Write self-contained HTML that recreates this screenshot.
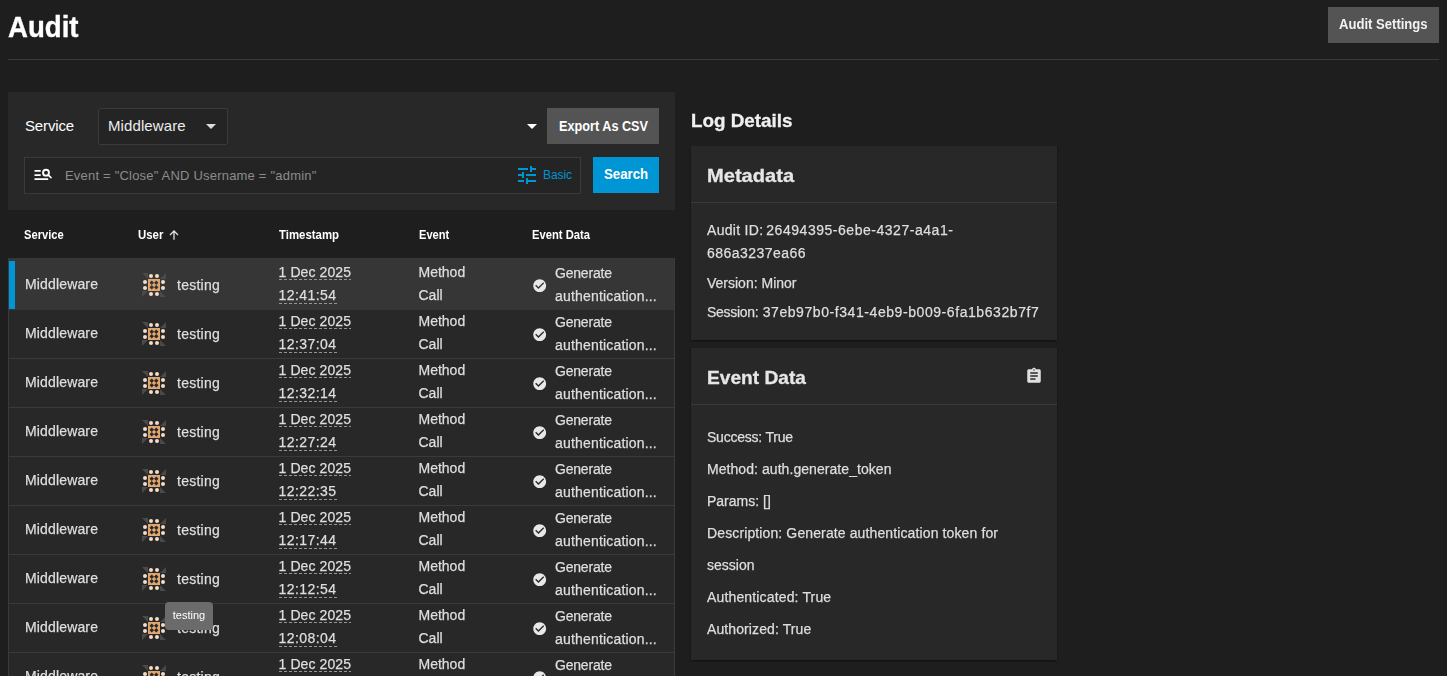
<!DOCTYPE html><html lang="en"><head><meta charset="utf-8"><title>Audit</title><style>
*{box-sizing:border-box;margin:0;padding:0}
html,body{width:1447px;height:676px;overflow:hidden;background:#1e1e1e}
body{position:relative;font-family:"Liberation Sans",sans-serif;color:#dedede;font-size:14px}
.abs{position:absolute}
.g{position:absolute;left:0;top:0;width:1447px;height:676px;will-change:transform}
.t{position:absolute;white-space:nowrap;line-height:1}
.sx{display:inline-block;transform-origin:0 50%;white-space:nowrap}
h1{position:absolute;left:8px;top:12.500px;font-size:29px;font-weight:bold;color:#fff;line-height:1;white-space:nowrap;will-change:transform;-webkit-text-stroke:0.350px #fff}
.btn{position:absolute;background:#545454;color:#fff;font-weight:bold;font-size:14px;white-space:nowrap}
.btn span{position:absolute;top:0}
.hr{position:absolute;left:8px;top:59px;width:1431px;height:1px;background:#3a3a3a}
.card{position:absolute;background:#282828}
.field{position:absolute;background:#242424;border:1px solid #3a3a3a;border-radius:2px}
.tri{position:absolute;width:0;height:0;border-left:5px solid transparent;border-right:5px solid transparent;border-top:5px solid #fff}
.th{position:absolute;top:228px;font-size:12px;font-weight:bold;color:#fff;line-height:14px;white-space:nowrap}
.row{position:absolute;left:8px;width:667px;height:49px;background:#282828;border-left:1px solid #3a3a3a;border-right:1px solid #3a3a3a;border-bottom:1px solid #3a3a3a}
.row .c{position:absolute;white-space:nowrap;line-height:23px;font-size:14px;color:#dedede;-webkit-text-stroke:0.250px #dedede}
.ul{background:repeating-linear-gradient(90deg,#959595 0 3px,transparent 3px 5px) left bottom/100% 1px no-repeat}
.p{position:absolute;left:707px;white-space:nowrap;font-size:14px;line-height:16px;color:#dedede;-webkit-text-stroke:0.250px #dedede}
.p b{font-weight:normal;position:absolute;top:0}
h3{position:absolute;font-size:19px;font-weight:bold;color:#e6e6e6;line-height:1;white-space:nowrap;-webkit-text-stroke:0.300px currentColor}
</style></head><body>
<h1><span class="sx" style="transform:scaleX(0.952)">Audit</span></h1>
<div class="g"><div class="btn" style="left:1328px;top:7px;width:111px;height:36px;line-height:35px;color:#f2f2f2"><span style="left:10.900px"><span class="sx" style="transform:scaleX(0.934)">Audit Settings</span></span></div></div>
<div class="hr"></div>
<div class="card" style="left:8px;top:92px;width:667px;height:118px"></div>
<div class="t" style="left:25px;top:118px;font-size:15px;color:#fff;letter-spacing:-0.15px">Service</div>
<div class="field" style="left:98px;top:108px;width:130px;height:37px"></div>
<div class="t" style="left:108px;top:118px;font-size:15px;color:#ececec;letter-spacing:0.1px">Middleware</div>
<div class="tri" style="left:206px;top:124px;border-top-color:#dcdcdc"></div>
<div class="tri" style="left:527px;top:124px"></div>
<div class="btn" style="left:547px;top:108px;width:112px;height:36px;line-height:37px"><span style="left:11.500px"><span class="sx" style="transform:scaleX(0.906)">Export As CSV</span></span></div>
<div class="field" style="left:24px;top:157px;width:557px;height:37px;border-radius:0"></div>
<svg class="abs" style="left:28px;top:162px" width="30" height="26" viewBox="0 0 30 26"><path fill="#fff" d="M6.500 8.100h6.200v1.600h-6.200zM6.500 12.200h6.200v1.700h-6.200zM6.500 16.300h13.700v1.700H6.500z"/><circle cx="18" cy="10.650" r="2.950" fill="none" stroke="#fff" stroke-width="1.900"/><path d="M20.300 13.100l2.700 2.500" stroke="#fff" stroke-width="1.600" stroke-linecap="round" fill="none"/></svg>
<div class="t" style="left:65px;top:169px;font-size:13px;color:#8c8c8c;letter-spacing:0.2px">Event = "Close" AND Username = "admin"</div>
<svg class="abs" style="left:515px;top:163px" width="24" height="24" viewBox="0 0 24 24"><path fill="#0095d5" d="M3 17v2h6v-2H3zM3 5v2h10V5H3zm10 16v-2h8v-2h-8v-2h-2v6h2zM7 9v2H3v2h4v2h2V9H7zm14 4v-2H11v2h10zm-6-4h2V7h4V5h-4V3h-2v6z"/></svg>
<div class="t" style="left:543px;top:169px;font-size:12px;color:#0095d5;letter-spacing:-0.1px">Basic</div>
<div class="btn" style="left:593px;top:157px;width:66px;height:36px;line-height:35px;background:#0095d5"><span style="left:11px"><span class="sx" style="transform:scaleX(0.945)">Search</span></span></div>
<div class="th" style="left:24px"><span class="sx" style="transform:scaleX(0.93)">Service</span></div>
<div class="th" style="left:138px"><span class="sx" style="transform:scaleX(0.95)">User</span></div>
<div class="th" style="left:278.5px"><span class="sx" style="transform:scaleX(0.95)">Timestamp</span></div>
<div class="th" style="left:418.5px"><span class="sx" style="transform:scaleX(0.925)">Event</span></div>
<div class="th" style="left:532px"><span class="sx" style="transform:scaleX(0.935)">Event Data</span></div>
<svg class="abs" style="left:169px;top:230px" width="10" height="10" viewBox="0 0 10 10"><path fill="none" stroke="#e0e0e0" stroke-width="1.3" d="M5 9.800V1.200M1 5l4-4 4 4"/></svg>
<div class="g">
<div class="abs" style="left:8px;top:258px;width:667px;height:52px;background:#363636;border-left:1px solid #3a3a3a;border-right:1px solid #3a3a3a"></div>
<div class="abs" style="left:9px;top:261px;width:6px;height:48px;background:#0095d5"></div>
<div class="row" style="top:261px;background:transparent;border-bottom-color:transparent">
<div class="c" style="left:16px;top:12px;letter-spacing:0.15px">Middleware</div>
<svg class="abs" style="left:133px;top:12px" width="24" height="24" viewBox="0 0 24 24"><path fill="#4a4a4a" d="M0 0h6v6zM24 0v6h-6zM24 24h-6v-6zM0 24v-6h6z"/><g fill="#f5dcc8"><circle cx="9" cy="3" r="2"/><circle cx="15" cy="3" r="2"/><circle cx="21" cy="9" r="2"/><circle cx="21" cy="15" r="2"/><circle cx="15" cy="21" r="2"/><circle cx="9" cy="21" r="2"/><circle cx="3" cy="15" r="2"/><circle cx="3" cy="9" r="2"/></g><path fill="#e0a66f" fill-rule="evenodd" d="M6 6h12v12H6zM9.75 7.5l2.25 2.25-2.25 2.25-2.25-2.25zM14.25 7.5l2.25 2.25-2.25 2.25-2.25-2.25zM9.75 12.0l2.25 2.25-2.25 2.25-2.25-2.25zM14.25 12.0l2.25 2.25-2.25 2.25-2.25-2.25z"/></svg>
<div class="c" style="left:168px;top:13px;letter-spacing:0.25px">testing</div>
<div class="c ul" style="left:269.500px;top:0px;height:19px;letter-spacing:0.1px">1 Dec 2025</div>
<div class="c ul" style="left:269.500px;top:23px;height:20px;letter-spacing:0.45px;margin-right:-0.450px">12:41:54</div>
<div class="c" style="left:409.500px;top:0px">Method<br>Call</div>
<svg class="abs" style="left:522.7px;top:16.9px" width="15.400" height="15.400" viewBox="0 0 24 24"><path fill="#e8e8e8" d="M12 2C6.48 2 2 6.48 2 12s4.480 10 10 10 10-4.480 10-10S17.520 2 12 2zm-2 15l-5-5 1.410-1.410L10 14.170l7.590-7.590L19 8l-9 9z"/></svg>
<div class="c" style="left:546px;top:1px"><span style="letter-spacing:-0.2px">Generate</span><br><span style="letter-spacing:0.18px">authentication...</span></div>
</div>
<div class="row" style="top:310px">
<div class="c" style="left:16px;top:12px;letter-spacing:0.15px">Middleware</div>
<svg class="abs" style="left:133px;top:12px" width="24" height="24" viewBox="0 0 24 24"><path fill="#4a4a4a" d="M0 0h6v6zM24 0v6h-6zM24 24h-6v-6zM0 24v-6h6z"/><g fill="#f5dcc8"><circle cx="9" cy="3" r="2"/><circle cx="15" cy="3" r="2"/><circle cx="21" cy="9" r="2"/><circle cx="21" cy="15" r="2"/><circle cx="15" cy="21" r="2"/><circle cx="9" cy="21" r="2"/><circle cx="3" cy="15" r="2"/><circle cx="3" cy="9" r="2"/></g><path fill="#e0a66f" fill-rule="evenodd" d="M6 6h12v12H6zM9.75 7.5l2.25 2.25-2.25 2.25-2.25-2.25zM14.25 7.5l2.25 2.25-2.25 2.25-2.25-2.25zM9.75 12.0l2.25 2.25-2.25 2.25-2.25-2.25zM14.25 12.0l2.25 2.25-2.25 2.25-2.25-2.25z"/></svg>
<div class="c" style="left:168px;top:13px;letter-spacing:0.25px">testing</div>
<div class="c ul" style="left:269.500px;top:0px;height:19px;letter-spacing:0.1px">1 Dec 2025</div>
<div class="c ul" style="left:269.500px;top:23px;height:20px;letter-spacing:0.45px;margin-right:-0.450px">12:37:04</div>
<div class="c" style="left:409.500px;top:0px">Method<br>Call</div>
<svg class="abs" style="left:522.7px;top:16.9px" width="15.400" height="15.400" viewBox="0 0 24 24"><path fill="#e8e8e8" d="M12 2C6.48 2 2 6.48 2 12s4.480 10 10 10 10-4.480 10-10S17.520 2 12 2zm-2 15l-5-5 1.410-1.410L10 14.170l7.590-7.590L19 8l-9 9z"/></svg>
<div class="c" style="left:546px;top:1px"><span style="letter-spacing:-0.2px">Generate</span><br><span style="letter-spacing:0.18px">authentication...</span></div>
</div>
<div class="row" style="top:359px">
<div class="c" style="left:16px;top:12px;letter-spacing:0.15px">Middleware</div>
<svg class="abs" style="left:133px;top:12px" width="24" height="24" viewBox="0 0 24 24"><path fill="#4a4a4a" d="M0 0h6v6zM24 0v6h-6zM24 24h-6v-6zM0 24v-6h6z"/><g fill="#f5dcc8"><circle cx="9" cy="3" r="2"/><circle cx="15" cy="3" r="2"/><circle cx="21" cy="9" r="2"/><circle cx="21" cy="15" r="2"/><circle cx="15" cy="21" r="2"/><circle cx="9" cy="21" r="2"/><circle cx="3" cy="15" r="2"/><circle cx="3" cy="9" r="2"/></g><path fill="#e0a66f" fill-rule="evenodd" d="M6 6h12v12H6zM9.75 7.5l2.25 2.25-2.25 2.25-2.25-2.25zM14.25 7.5l2.25 2.25-2.25 2.25-2.25-2.25zM9.75 12.0l2.25 2.25-2.25 2.25-2.25-2.25zM14.25 12.0l2.25 2.25-2.25 2.25-2.25-2.25z"/></svg>
<div class="c" style="left:168px;top:13px;letter-spacing:0.25px">testing</div>
<div class="c ul" style="left:269.500px;top:0px;height:19px;letter-spacing:0.1px">1 Dec 2025</div>
<div class="c ul" style="left:269.500px;top:23px;height:20px;letter-spacing:0.45px;margin-right:-0.450px">12:32:14</div>
<div class="c" style="left:409.500px;top:0px">Method<br>Call</div>
<svg class="abs" style="left:522.7px;top:16.9px" width="15.400" height="15.400" viewBox="0 0 24 24"><path fill="#e8e8e8" d="M12 2C6.48 2 2 6.48 2 12s4.480 10 10 10 10-4.480 10-10S17.520 2 12 2zm-2 15l-5-5 1.410-1.410L10 14.170l7.590-7.590L19 8l-9 9z"/></svg>
<div class="c" style="left:546px;top:1px"><span style="letter-spacing:-0.2px">Generate</span><br><span style="letter-spacing:0.18px">authentication...</span></div>
</div>
<div class="row" style="top:408px">
<div class="c" style="left:16px;top:12px;letter-spacing:0.15px">Middleware</div>
<svg class="abs" style="left:133px;top:12px" width="24" height="24" viewBox="0 0 24 24"><path fill="#4a4a4a" d="M0 0h6v6zM24 0v6h-6zM24 24h-6v-6zM0 24v-6h6z"/><g fill="#f5dcc8"><circle cx="9" cy="3" r="2"/><circle cx="15" cy="3" r="2"/><circle cx="21" cy="9" r="2"/><circle cx="21" cy="15" r="2"/><circle cx="15" cy="21" r="2"/><circle cx="9" cy="21" r="2"/><circle cx="3" cy="15" r="2"/><circle cx="3" cy="9" r="2"/></g><path fill="#e0a66f" fill-rule="evenodd" d="M6 6h12v12H6zM9.75 7.5l2.25 2.25-2.25 2.25-2.25-2.25zM14.25 7.5l2.25 2.25-2.25 2.25-2.25-2.25zM9.75 12.0l2.25 2.25-2.25 2.25-2.25-2.25zM14.25 12.0l2.25 2.25-2.25 2.25-2.25-2.25z"/></svg>
<div class="c" style="left:168px;top:13px;letter-spacing:0.25px">testing</div>
<div class="c ul" style="left:269.500px;top:0px;height:19px;letter-spacing:0.1px">1 Dec 2025</div>
<div class="c ul" style="left:269.500px;top:23px;height:20px;letter-spacing:0.45px;margin-right:-0.450px">12:27:24</div>
<div class="c" style="left:409.500px;top:0px">Method<br>Call</div>
<svg class="abs" style="left:522.7px;top:16.9px" width="15.400" height="15.400" viewBox="0 0 24 24"><path fill="#e8e8e8" d="M12 2C6.48 2 2 6.48 2 12s4.480 10 10 10 10-4.480 10-10S17.520 2 12 2zm-2 15l-5-5 1.410-1.410L10 14.170l7.590-7.590L19 8l-9 9z"/></svg>
<div class="c" style="left:546px;top:1px"><span style="letter-spacing:-0.2px">Generate</span><br><span style="letter-spacing:0.18px">authentication...</span></div>
</div>
<div class="row" style="top:457px">
<div class="c" style="left:16px;top:12px;letter-spacing:0.15px">Middleware</div>
<svg class="abs" style="left:133px;top:12px" width="24" height="24" viewBox="0 0 24 24"><path fill="#4a4a4a" d="M0 0h6v6zM24 0v6h-6zM24 24h-6v-6zM0 24v-6h6z"/><g fill="#f5dcc8"><circle cx="9" cy="3" r="2"/><circle cx="15" cy="3" r="2"/><circle cx="21" cy="9" r="2"/><circle cx="21" cy="15" r="2"/><circle cx="15" cy="21" r="2"/><circle cx="9" cy="21" r="2"/><circle cx="3" cy="15" r="2"/><circle cx="3" cy="9" r="2"/></g><path fill="#e0a66f" fill-rule="evenodd" d="M6 6h12v12H6zM9.75 7.5l2.25 2.25-2.25 2.25-2.25-2.25zM14.25 7.5l2.25 2.25-2.25 2.25-2.25-2.25zM9.75 12.0l2.25 2.25-2.25 2.25-2.25-2.25zM14.25 12.0l2.25 2.25-2.25 2.25-2.25-2.25z"/></svg>
<div class="c" style="left:168px;top:13px;letter-spacing:0.25px">testing</div>
<div class="c ul" style="left:269.500px;top:0px;height:19px;letter-spacing:0.1px">1 Dec 2025</div>
<div class="c ul" style="left:269.500px;top:23px;height:20px;letter-spacing:0.45px;margin-right:-0.450px">12:22:35</div>
<div class="c" style="left:409.500px;top:0px">Method<br>Call</div>
<svg class="abs" style="left:522.7px;top:16.9px" width="15.400" height="15.400" viewBox="0 0 24 24"><path fill="#e8e8e8" d="M12 2C6.48 2 2 6.48 2 12s4.480 10 10 10 10-4.480 10-10S17.520 2 12 2zm-2 15l-5-5 1.410-1.410L10 14.170l7.590-7.590L19 8l-9 9z"/></svg>
<div class="c" style="left:546px;top:1px"><span style="letter-spacing:-0.2px">Generate</span><br><span style="letter-spacing:0.18px">authentication...</span></div>
</div>
<div class="row" style="top:506px">
<div class="c" style="left:16px;top:12px;letter-spacing:0.15px">Middleware</div>
<svg class="abs" style="left:133px;top:12px" width="24" height="24" viewBox="0 0 24 24"><path fill="#4a4a4a" d="M0 0h6v6zM24 0v6h-6zM24 24h-6v-6zM0 24v-6h6z"/><g fill="#f5dcc8"><circle cx="9" cy="3" r="2"/><circle cx="15" cy="3" r="2"/><circle cx="21" cy="9" r="2"/><circle cx="21" cy="15" r="2"/><circle cx="15" cy="21" r="2"/><circle cx="9" cy="21" r="2"/><circle cx="3" cy="15" r="2"/><circle cx="3" cy="9" r="2"/></g><path fill="#e0a66f" fill-rule="evenodd" d="M6 6h12v12H6zM9.75 7.5l2.25 2.25-2.25 2.25-2.25-2.25zM14.25 7.5l2.25 2.25-2.25 2.25-2.25-2.25zM9.75 12.0l2.25 2.25-2.25 2.25-2.25-2.25zM14.25 12.0l2.25 2.25-2.25 2.25-2.25-2.25z"/></svg>
<div class="c" style="left:168px;top:13px;letter-spacing:0.25px">testing</div>
<div class="c ul" style="left:269.500px;top:0px;height:19px;letter-spacing:0.1px">1 Dec 2025</div>
<div class="c ul" style="left:269.500px;top:23px;height:20px;letter-spacing:0.45px;margin-right:-0.450px">12:17:44</div>
<div class="c" style="left:409.500px;top:0px">Method<br>Call</div>
<svg class="abs" style="left:522.7px;top:16.9px" width="15.400" height="15.400" viewBox="0 0 24 24"><path fill="#e8e8e8" d="M12 2C6.48 2 2 6.48 2 12s4.480 10 10 10 10-4.480 10-10S17.520 2 12 2zm-2 15l-5-5 1.410-1.410L10 14.170l7.590-7.590L19 8l-9 9z"/></svg>
<div class="c" style="left:546px;top:1px"><span style="letter-spacing:-0.2px">Generate</span><br><span style="letter-spacing:0.18px">authentication...</span></div>
</div>
<div class="row" style="top:555px">
<div class="c" style="left:16px;top:12px;letter-spacing:0.15px">Middleware</div>
<svg class="abs" style="left:133px;top:12px" width="24" height="24" viewBox="0 0 24 24"><path fill="#4a4a4a" d="M0 0h6v6zM24 0v6h-6zM24 24h-6v-6zM0 24v-6h6z"/><g fill="#f5dcc8"><circle cx="9" cy="3" r="2"/><circle cx="15" cy="3" r="2"/><circle cx="21" cy="9" r="2"/><circle cx="21" cy="15" r="2"/><circle cx="15" cy="21" r="2"/><circle cx="9" cy="21" r="2"/><circle cx="3" cy="15" r="2"/><circle cx="3" cy="9" r="2"/></g><path fill="#e0a66f" fill-rule="evenodd" d="M6 6h12v12H6zM9.75 7.5l2.25 2.25-2.25 2.25-2.25-2.25zM14.25 7.5l2.25 2.25-2.25 2.25-2.25-2.25zM9.75 12.0l2.25 2.25-2.25 2.25-2.25-2.25zM14.25 12.0l2.25 2.25-2.25 2.25-2.25-2.25z"/></svg>
<div class="c" style="left:168px;top:13px;letter-spacing:0.25px">testing</div>
<div class="c ul" style="left:269.500px;top:0px;height:19px;letter-spacing:0.1px">1 Dec 2025</div>
<div class="c ul" style="left:269.500px;top:23px;height:20px;letter-spacing:0.45px;margin-right:-0.450px">12:12:54</div>
<div class="c" style="left:409.500px;top:0px">Method<br>Call</div>
<svg class="abs" style="left:522.7px;top:16.9px" width="15.400" height="15.400" viewBox="0 0 24 24"><path fill="#e8e8e8" d="M12 2C6.48 2 2 6.48 2 12s4.480 10 10 10 10-4.480 10-10S17.520 2 12 2zm-2 15l-5-5 1.410-1.410L10 14.170l7.590-7.590L19 8l-9 9z"/></svg>
<div class="c" style="left:546px;top:1px"><span style="letter-spacing:-0.2px">Generate</span><br><span style="letter-spacing:0.18px">authentication...</span></div>
</div>
<div class="row" style="top:604px">
<div class="c" style="left:16px;top:12px;letter-spacing:0.15px">Middleware</div>
<svg class="abs" style="left:133px;top:12px" width="24" height="24" viewBox="0 0 24 24"><path fill="#4a4a4a" d="M0 0h6v6zM24 0v6h-6zM24 24h-6v-6zM0 24v-6h6z"/><g fill="#f5dcc8"><circle cx="9" cy="3" r="2"/><circle cx="15" cy="3" r="2"/><circle cx="21" cy="9" r="2"/><circle cx="21" cy="15" r="2"/><circle cx="15" cy="21" r="2"/><circle cx="9" cy="21" r="2"/><circle cx="3" cy="15" r="2"/><circle cx="3" cy="9" r="2"/></g><path fill="#e0a66f" fill-rule="evenodd" d="M6 6h12v12H6zM9.75 7.5l2.25 2.25-2.25 2.25-2.25-2.25zM14.25 7.5l2.25 2.25-2.25 2.25-2.25-2.25zM9.75 12.0l2.25 2.25-2.25 2.25-2.25-2.25zM14.25 12.0l2.25 2.25-2.25 2.25-2.25-2.25z"/></svg>
<div class="c" style="left:168px;top:13px;letter-spacing:0.25px">testing</div>
<div class="c ul" style="left:269.500px;top:0px;height:19px;letter-spacing:0.1px">1 Dec 2025</div>
<div class="c ul" style="left:269.500px;top:23px;height:20px;letter-spacing:0.45px;margin-right:-0.450px">12:08:04</div>
<div class="c" style="left:409.500px;top:0px">Method<br>Call</div>
<svg class="abs" style="left:522.7px;top:16.9px" width="15.400" height="15.400" viewBox="0 0 24 24"><path fill="#e8e8e8" d="M12 2C6.48 2 2 6.48 2 12s4.480 10 10 10 10-4.480 10-10S17.520 2 12 2zm-2 15l-5-5 1.410-1.410L10 14.170l7.590-7.590L19 8l-9 9z"/></svg>
<div class="c" style="left:546px;top:1px"><span style="letter-spacing:-0.2px">Generate</span><br><span style="letter-spacing:0.18px">authentication...</span></div>
</div>
<div class="row" style="top:653px">
<div class="c" style="left:16px;top:12px;letter-spacing:0.15px">Middleware</div>
<svg class="abs" style="left:133px;top:12px" width="24" height="24" viewBox="0 0 24 24"><path fill="#4a4a4a" d="M0 0h6v6zM24 0v6h-6zM24 24h-6v-6zM0 24v-6h6z"/><g fill="#f5dcc8"><circle cx="9" cy="3" r="2"/><circle cx="15" cy="3" r="2"/><circle cx="21" cy="9" r="2"/><circle cx="21" cy="15" r="2"/><circle cx="15" cy="21" r="2"/><circle cx="9" cy="21" r="2"/><circle cx="3" cy="15" r="2"/><circle cx="3" cy="9" r="2"/></g><path fill="#e0a66f" fill-rule="evenodd" d="M6 6h12v12H6zM9.75 7.5l2.25 2.25-2.25 2.25-2.25-2.25zM14.25 7.5l2.25 2.25-2.25 2.25-2.25-2.25zM9.75 12.0l2.25 2.25-2.25 2.25-2.25-2.25zM14.25 12.0l2.25 2.25-2.25 2.25-2.25-2.25z"/></svg>
<div class="c" style="left:168px;top:13px;letter-spacing:0.25px">testing</div>
<div class="c ul" style="left:269.500px;top:0px;height:19px;letter-spacing:0.1px">1 Dec 2025</div>
<div class="c ul" style="left:269.500px;top:23px;height:20px;letter-spacing:0.45px;margin-right:-0.450px">12:03:14</div>
<div class="c" style="left:409.500px;top:0px">Method<br>Call</div>
<svg class="abs" style="left:522.7px;top:16.9px" width="15.400" height="15.400" viewBox="0 0 24 24"><path fill="#e8e8e8" d="M12 2C6.48 2 2 6.48 2 12s4.480 10 10 10 10-4.480 10-10S17.520 2 12 2zm-2 15l-5-5 1.410-1.410L10 14.170l7.590-7.590L19 8l-9 9z"/></svg>
<div class="c" style="left:546px;top:1px"><span style="letter-spacing:-0.2px">Generate</span><br><span style="letter-spacing:0.18px">authentication...</span></div>
</div>
<div class="abs" style="left:165px;top:602px;width:48px;height:28px;background:#6b6b6b;border-radius:4px;color:#fff;font-size:11px;line-height:27px;text-align:center">testing</div>
</div>
<h3 style="left:691px;top:111px;color:#f0f0f0"><span class="sx" style="transform:scaleX(0.991)">Log Details</span></h3>
<div class="g">
<div class="card" style="left:691px;top:146px;width:366px;height:194px;box-shadow:0 1px 2px rgba(0,0,0,.45)"></div>
<h3 style="left:707px;top:166px"><span class="sx" style="transform:scaleX(1.057)">Metadata</span></h3>
<div class="abs" style="left:691px;top:202px;width:366px;height:1px;background:#3a3a3a"></div>
<div class="p" style="top:222px"><span style="letter-spacing:0.3px">Audit ID: </span><b style="left:59.3px;letter-spacing:0.53px">26494395-6ebe-4327-a4a1-</b></div>
<div class="p" style="top:245px"><span style="letter-spacing:0.47px">686a3237ea66</span></div>
<div class="p" style="top:275px"><span style="letter-spacing:0px">Version: Minor</span></div>
<div class="p" style="top:304px"><span style="letter-spacing:-0.28px">Session: </span><b style="left:55.7px;letter-spacing:0.57px">37eb97b0-f341-4eb9-b009-6fa1b632b7f7</b></div>
<div class="card" style="left:691px;top:348px;width:366px;height:312px;box-shadow:0 1px 2px rgba(0,0,0,.45)"></div>
<h3 style="left:707px;top:368px"><span class="sx" style="transform:scaleX(1.008)">Event Data</span></h3>
<svg class="abs" style="left:1025px;top:367px" width="18" height="18" viewBox="0 0 24 24"><path fill="#e0e0e0" d="M19 3h-4.180C14.400 1.840 13.300 1 12 1c-1.300 0-2.400.840-2.820 2H5c-1.100 0-2 .900-2 2v14c0 1.100.900 2 2 2h14c1.100 0 2-.900 2-2V5c0-1.100-.900-2-2-2zm-7 0c.550 0 1 .450 1 1s-.450 1-1 1-1-.450-1-1 .450-1 1-1zm2 14H7v-2h7v2zm3-4H7v-2h10v2zm0-4H7V7h10v2z"/></svg>
<div class="abs" style="left:691px;top:404px;width:366px;height:1px;background:#3a3a3a"></div>
<div class="p" style="top:429px"><span style="letter-spacing:-0.22px">Success: True</span></div>
<div class="p" style="top:461px"><span style="letter-spacing:0.06px">Method: auth.generate_token</span></div>
<div class="p" style="top:493px"><span style="letter-spacing:0px">Params: []</span></div>
<div class="p" style="top:525px"><span style="letter-spacing:0.12px">Description: Generate authentication token for</span></div>
<div class="p" style="top:557px"><span style="letter-spacing:0px">session</span></div>
<div class="p" style="top:589px"><span style="letter-spacing:0.15px">Authenticated: True</span></div>
<div class="p" style="top:621px"><span style="letter-spacing:0.1px">Authorized: True</span></div>
</div>
</body></html>
